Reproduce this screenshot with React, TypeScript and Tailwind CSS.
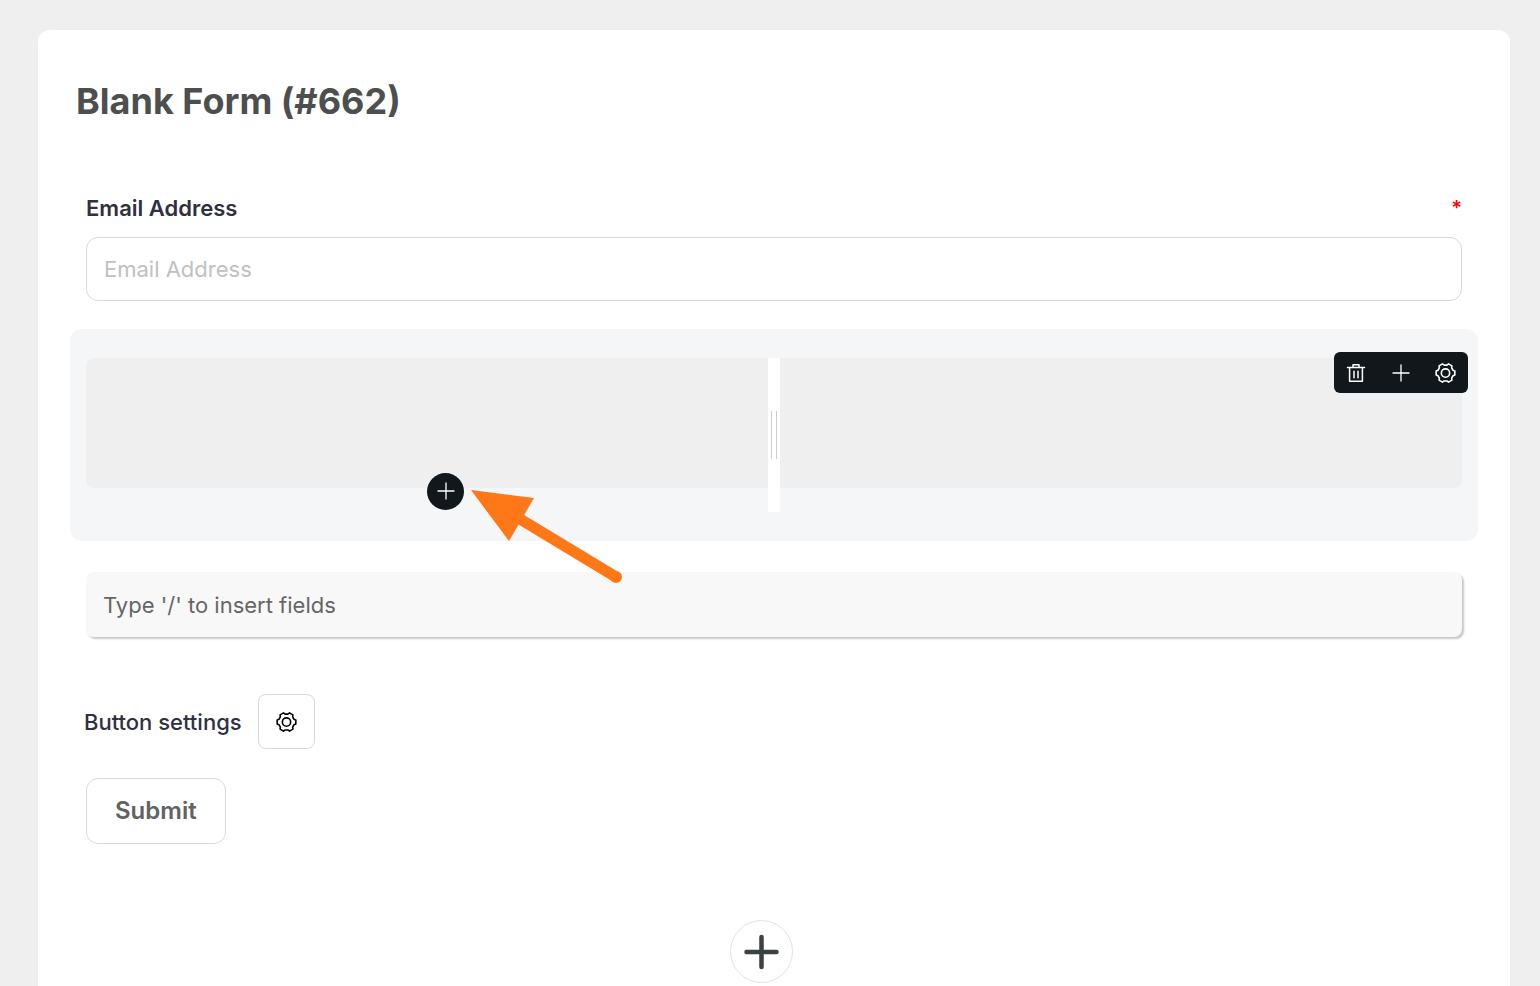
import React from "react";

function GearIcon() {
  return (
    <svg viewBox="0 0 24 24" className="h-5 w-[21px]" fill="none" stroke="currentColor" strokeWidth="1.9" strokeLinejoin="round" aria-hidden="true">
      <path d="M23.2 9.6V14.4L21 15.3L19.4 18.2L19.7 20.5L15.6 22.9L13.7 21.5H10.3L8.4 22.9L4.3 20.5L4.6 18.2L3 15.3L.8 14.4V9.6L3 8.7L4.6 5.8L4.3 3.5L8.4 1.1L10.3 2.5H13.7L15.6 1.1L19.7 3.5L19.4 5.8L21 8.7Z" />
      <circle cx="12" cy="12" r="5" />
    </svg>
  );
}

function TrashIcon() {
  return (
    <svg viewBox="0 0 20 20" className="size-5" fill="none" stroke="currentColor" strokeWidth="1.5" strokeLinecap="round" strokeLinejoin="round" aria-hidden="true">
      <path d="M1.5 4.5h17M7 4V1.7h6V4M3.6 4.5v13.8h12.8V4.5" />
      <path d="M8 8.3v6.4M12 8.3v6.4" />
    </svg>
  );
}

function PlusIcon() {
  return (
    <svg viewBox="0 0 20 20" className="size-5" fill="none" stroke="currentColor" strokeWidth="1.3" strokeLinecap="round" aria-hidden="true">
      <path d="M10 2v16M2 10h16" />
    </svg>
  );
}

function Arrow() {
  return (
    <svg viewBox="0 0 154 96" className="pointer-events-none absolute top-[160px] left-[400px] z-10 h-24 w-[154px]" aria-hidden="true">
      <path d="M50 30 L146 88" stroke="#ff7817" strokeWidth="11" />
      <circle cx="146" cy="88" r="6" fill="#ff7817" />
      <path d="M1 1 L64 9 L39 52 Z" fill="#ff7817" />
    </svg>
  );
}

export default function App() {
  return (
    <div className="min-h-screen bg-[#efefef] pt-[30px] pr-[30px] pl-[38px] font-['Inter',sans-serif]">
      <main className="flex min-h-[956px] flex-col rounded-t-xl bg-white px-8 pt-12">
        <h1 className="px-[6px] text-[36px] leading-[46px] font-bold text-[#4d4f4f]">Blank Form (#662)</h1>

        <section className="mt-[68px] px-4">
          <div className="flex items-start justify-between">
            <label htmlFor="email" className="text-[22px] leading-8 font-semibold text-[#2f3041]">Email Address</label>
            <span className="text-[20px] leading-8 font-semibold text-[#f00]">*</span>
          </div>
          <input
            id="email"
            type="email"
            required
            placeholder="Email Address"
            className="mt-[13px] block h-16 w-full rounded-xl border border-[#d9d9db] bg-white px-[17px] text-[22px] text-[#4d4f4f] placeholder:text-[#bfc1c3]"
          />
        </section>

        <section aria-label="Columns" className="relative mt-7 rounded-xl bg-[#f4f6f8] px-4 pt-[29px] pb-[29px]">
          <div className="flex h-[154px] items-start">
            <div className="relative h-[130px] flex-1 rounded-l-lg bg-[#efefef]">
              <button type="button" aria-label="Add field" className="absolute top-[115px] left-1/2 flex size-[37px] items-center justify-center rounded-full bg-[#11171b] pb-[2px] text-white">
                <PlusIcon />
              </button>
            </div>
            <div className="flex h-full w-3 items-center justify-center gap-1 bg-white">
              <span className="h-12 w-px bg-[#cfcfcf]" />
              <span className="h-12 w-px bg-[#cfcfcf]" />
            </div>
            <div className="h-[130px] flex-1 rounded-r-lg bg-[#efefef]" />
          </div>
          <div className="absolute top-[23px] right-[10px] flex h-[41px] w-[134px] items-center justify-between rounded-md bg-[#11171b] px-3 text-white">
            <button type="button" aria-label="Delete"><TrashIcon /></button>
            <button type="button" aria-label="Add"><PlusIcon /></button>
            <button type="button" aria-label="Settings"><GearIcon /></button>
          </div>
          <Arrow />
        </section>

        <div className="mt-[31px] px-4">
          <input
            type="text"
            aria-label="Insert fields"
            placeholder="Type '/' to insert fields"
            className="block h-[65px] w-full rounded-lg bg-[#f8f8f8] px-[17px] text-[22px] text-[#666] shadow-[2px_2px_2px_rgba(0,0,0,0.22)] placeholder:text-[#666]"
          />
        </div>

        <div className="mt-[57px] flex items-center gap-4 px-[14px]">
          <span className="text-[22px] leading-8 font-medium text-[#2f3041]">Button settings</span>
          <button type="button" aria-label="Button settings" className="flex h-[55px] w-[57px] items-center justify-center rounded-lg border border-[#d9d9db] bg-white text-black">
            <GearIcon />
          </button>
        </div>

        <div className="mt-[29px] px-4">
          <button type="button" className="h-[66px] rounded-xl border border-[#d9d9db] bg-white px-7 text-[24px] font-semibold text-[#606263]">Submit</button>
        </div>

        <div className="mt-[76px] flex justify-center pr-[26px]">
          <button type="button" aria-label="Add new field" className="flex size-[63px] items-center justify-center rounded-full border border-[#e3e3e5] bg-white text-[#3b4144]">
            <svg viewBox="0 0 36 36" className="size-9" fill="none" stroke="currentColor" strokeWidth="4.5" strokeLinecap="round" aria-hidden="true">
              <path d="M18.5 3v30M3.5 18h30" />
            </svg>
          </button>
        </div>
      </main>
    </div>
  );
}
